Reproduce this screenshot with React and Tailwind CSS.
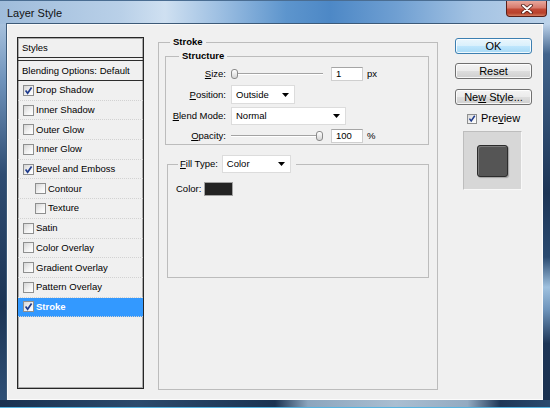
import React from "react";

function Check({ checked, size = "w-[11px] h-[11px]" }) {
  return (
    <span
      className={`${size} shrink-0 border border-[#8e8f8f] bg-[linear-gradient(135deg,#d6d6d6_0%,#f4f4f4_60%,#ffffff_100%)] flex items-center justify-center`}
    >
      {checked && (
        <svg width="9" height="9" viewBox="0 0 9 9">
          <path d="M1.6 4.6 L3.6 7.2 L7.6 1.4" stroke="#1e3a8c" strokeWidth="1.7" fill="none" />
        </svg>
      )}
    </span>
  );
}

function Row({ label, checked, indent, selected }) {
  return (
    <div
      className={`h-[19.7px] shrink-0 flex items-center gap-[2px] border-b border-dotted border-[#d2d2d2] ${
        indent ? "pl-[17px]" : "pl-[5px]"
      } ${selected ? "bg-[#3399ff] text-white font-bold" : ""}`}
    >
      <Check checked={checked} />
      <span className="leading-[12px] whitespace-nowrap">{label}</span>
    </div>
  );
}

function Thumb() {
  return (
    <span className="w-[7px] h-[10px] shrink-0 rounded-[3px] border border-[#8a8a8a] bg-linear-to-b from-white to-[#d4d4d4]" />
  );
}

function Slider({ right }) {
  return (
    <div className="w-[92px] h-[12px] flex items-center">
      {!right && <Thumb />}
      <div className="flex-1 h-[2px] border-t border-[#a3a3a3] border-b border-b-white" />
      {right && <Thumb />}
    </div>
  );
}

function Input({ value }) {
  return (
    <div className="w-[32px] h-[14px] bg-white border border-[#cfcfcf] border-t-[#a5a5a5] pl-[4px] flex items-center leading-[12px]">
      {value}
    </div>
  );
}

function Select({ className, children }) {
  return (
    <div className={`${className} bg-white border border-[#dcdcdc] flex items-center pl-[4px] pr-[5px]`}>
      <span className="flex-1 leading-[12px]">{children}</span>
      <svg width="7" height="4" viewBox="0 0 7 4">
        <path d="M0 0H7L3.5 4Z" fill="#000" />
      </svg>
    </div>
  );
}

function Label({ children }) {
  return <span className="w-[60px] shrink-0 text-right leading-[12px] whitespace-nowrap">{children}</span>;
}

function Button({ children, primary }) {
  return (
    <div
      className={`h-[16px] rounded-[3px] border flex items-center justify-center text-[11px] leading-[14px] shadow-[inset_0_0_0_1px_rgba(255,255,255,0.8)] ${
        primary
          ? "border-[#3c7fb1] bg-[linear-gradient(180deg,#eaf6fd_0%,#d9f0fc_48%,#bee6fd_52%,#a7d9f5_100%)]"
          : "border-[#707070] bg-[linear-gradient(180deg,#f4f4f4_0%,#ebebeb_48%,#dddddd_52%,#cfcfcf_100%)]"
      }`}
    >
      <span className="whitespace-pre">{children}</span>
    </div>
  );
}

export default function App() {
  return (
    <div className="w-[550px] h-[408px] flex flex-col overflow-hidden font-['Liberation_Sans',Arial,sans-serif] text-black select-none">
      {/* Title bar */}
      <div className="h-[24px] shrink-0 flex items-start border-t border-[#4a6d92] bg-[linear-gradient(90deg,#9fbcdb_0%,#b9d0e8_22%,#cfe0f1_30%,#9dbfe2_40%,#5d95cd_52%,#4d88c6_60%,#6f9fd2_72%,#a4c3e3_86%,#bcd3ea_100%)]">
        <span className="pl-[7px] pt-[5px] text-[11px] leading-[14px] text-[#111]">Layer Style</span>
        <div className="ml-auto mr-[3px] w-[41px] h-[16px] rounded-b-[4px] border border-t-0 border-[#5a1f18] bg-[linear-gradient(180deg,#e8a89d_0%,#d77a6c_45%,#c24a36_55%,#b8412c_80%,#d27b5e_100%)] flex items-center justify-center">
          <svg width="14" height="10" viewBox="0 0 14 10">
            <path d="M3 1.5 L11 8.5 M11 1.5 L3 8.5" stroke="#4a1a14" strokeWidth="3.6" strokeLinecap="round" />
            <path d="M3 1.5 L11 8.5 M11 1.5 L3 8.5" stroke="#ffffff" strokeWidth="2" strokeLinecap="round" />
          </svg>
        </div>
      </div>

      {/* Middle */}
      <div className="flex flex-1 min-h-0">
        <div className="w-[7px] shrink-0 bg-[linear-gradient(180deg,#a7c1dd_0%,#6f93bb_15%,#2e4c72_40%,#1c3454_75%,#2f5076_100%)]" />

        {/* Client area */}
        <div className="flex-1 bg-[#f0f0f0] border border-[#fbfbfb] shadow-[0_0_0_1px_#3d5a78] flex pl-[9px] pt-[12px] pr-[10px] text-[9.5px]">
          {/* Styles list */}
          <div className="w-[127px] h-[352px] shrink-0 border border-[#262626] shadow-[inset_0_0_0_1px_#a9a9a9] flex flex-col">
            <div className="h-[20px] shrink-0 flex items-center pl-[4px] border-b border-[#2d2d2d] leading-[12px]">
              Styles
            </div>
            <div className="h-[2px] shrink-0" />
            <div className="h-[21px] shrink-0 flex items-center pl-[4px] border-y border-[#2d2d2d] leading-[12px] whitespace-nowrap">
              Blending Options: Default
            </div>
            <Row label="Drop Shadow" checked />
            <Row label="Inner Shadow" />
            <Row label="Outer Glow" />
            <Row label="Inner Glow" />
            <Row label="Bevel and Emboss" checked />
            <Row label="Contour" indent />
            <Row label="Texture" indent />
            <Row label="Satin" />
            <Row label="Color Overlay" />
            <Row label="Gradient Overlay" />
            <Row label="Pattern Overlay" />
            <Row label="Stroke" checked selected />
          </div>

          {/* Stroke group */}
          <fieldset className="ml-[14px] -mt-[1px] w-[280px] h-[354px] shrink-0 border border-[#bcbcbc]">
            <legend className="ml-[11px] px-[3px] font-bold leading-[12px]">Stroke</legend>

            <fieldset className="mt-[2px] ml-[6px] mr-[8px] border border-[#bcbcbc] pb-[1px]">
              <legend className="ml-[13px] px-[3px] font-bold leading-[12px]">Structure</legend>

              <div className="mt-[5px] h-[14px] flex items-center">
                <Label>
                  <u>S</u>ize:
                </Label>
                <div className="ml-[5px]">
                  <Slider />
                </div>
                <div className="ml-[8px]">
                  <Input value="1" />
                </div>
                <span className="ml-[4px] leading-[12px]">px</span>
              </div>

              <div className="mt-[4px] h-[19px] flex items-center">
                <Label>
                  <u>P</u>osition:
                </Label>
                <div className="ml-[5px]">
                  <Select className="w-[64px] h-[19px]">Outside</Select>
                </div>
              </div>

              <div className="mt-[3px] h-[18px] flex items-center">
                <Label>
                  <u>B</u>lend Mode:
                </Label>
                <div className="ml-[5px]">
                  <Select className="w-[115px] h-[18px]">Normal</Select>
                </div>
              </div>

              <div className="mt-[4px] h-[14px] flex items-center">
                <Label>
                  <u>O</u>pacity:
                </Label>
                <div className="ml-[5px]">
                  <Slider right />
                </div>
                <div className="ml-[8px]">
                  <Input value="100" />
                </div>
                <span className="ml-[4px] leading-[12px]">%</span>
              </div>
            </fieldset>

            <fieldset className="mt-[10px] ml-[8px] mr-[8px] h-[123px] border border-[#bcbcbc]">
              <legend className="ml-[10px] pl-[2px] pr-[5px]">
                <div className="h-[18px] flex items-center gap-[4px]">
                  <span className="leading-[12px]">
                    <u>F</u>ill Type:
                  </span>
                  <Select className="w-[69px] h-[18px]">Color</Select>
                </div>
              </legend>
              <div className="mt-[9px] pl-[8px] flex items-center gap-[3px]">
                <span className="leading-[12px]">Color:</span>
                <span className="w-[29px] h-[14px] bg-[#232323] border border-[#a3a3a3]" />
              </div>
            </fieldset>
          </fieldset>

          {/* Right column */}
          <div className="ml-[17px] mt-[1px] w-[77px] shrink-0 flex flex-col">
            <Button primary>OK</Button>
            <div className="mt-[9px]">
              <Button>Reset</Button>
            </div>
            <div className="mt-[10px]">
              <Button>
                Ne<u>w</u>{" "}Style...
              </Button>
            </div>
            <div className="mt-[8px] h-[11px] flex items-center pl-[12px] gap-[4px] text-[11px]">
              <Check checked size="w-[10px] h-[10px]" />
              <span className="leading-[13px]">
                Pre<u>v</u>iew
              </span>
            </div>
            <div className="mt-[7px] ml-[8px] w-[59px] h-[59px] bg-[#d7d7d7] border border-[#f8f8f8] border-t-[#bdbdbd] border-l-[#bdbdbd] flex items-center justify-center">
              <div className="w-[31px] h-[32px] rounded-[3px] bg-[#555555] border border-[#2c2c2c] shadow-[inset_1px_1px_0_#7a7a7a,1px_1px_1px_rgba(0,0,0,0.25)]" />
            </div>
          </div>
        </div>

        <div className="w-[7px] shrink-0 bg-[linear-gradient(180deg,#bcd2ea_0%,#42648c_8%,#1d3556_45%,#2a4a70_62%,#9fc1df_70%,#6e94bb_76%,#1d3556_85%,#1a3150_100%)]" />
      </div>

      {/* Bottom frame */}
      <div className="h-[8px] shrink-0 border-b border-[#57b3df] bg-[linear-gradient(90deg,#1a3150_0%,#2c4a6c_25%,#1b3352_50%,#8ca5bd_56%,#aabed1_72%,#93aac1_85%,#1f3757_91%,#2a4a6e_100%)]" />
    </div>
  );
}
